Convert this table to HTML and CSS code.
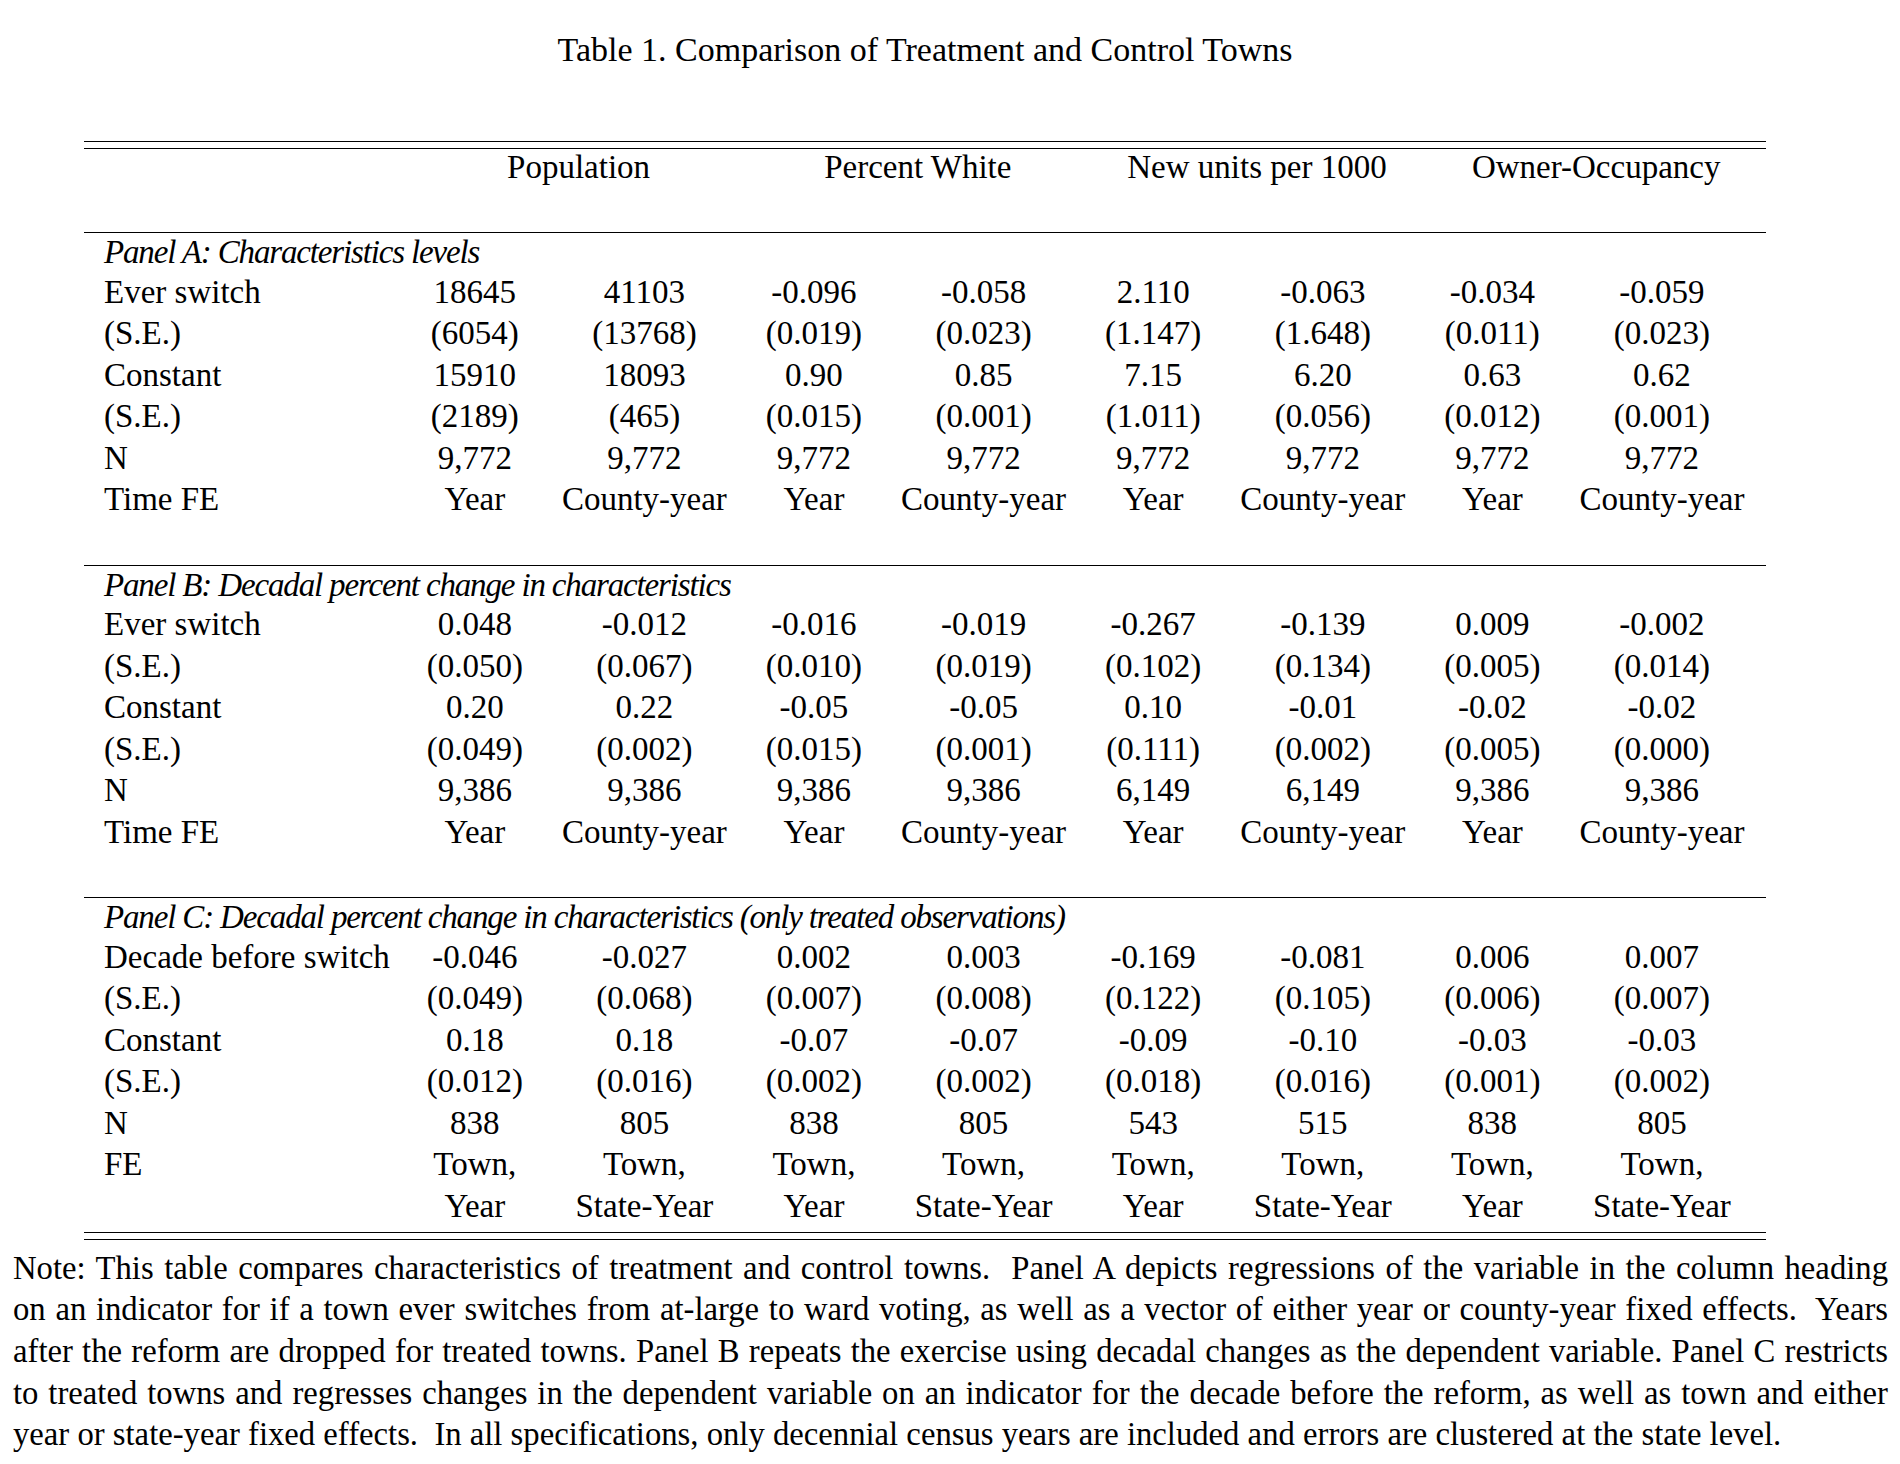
FILE: index.html
```html
<!DOCTYPE html>
<html lang="en">
<head>
<meta charset="utf-8">
<title>Table 1. Comparison of Treatment and Control Towns</title>
<link rel="stylesheet" href="styles.css">
</head>
<body>
<div class="page">
  <div class="wrap">
    <h1 class="title">Table 1. Comparison of Treatment and Control Towns</h1>
    <div class="tbl">
      <div class="rule-double"></div>
      <div class="head">
        <div class="row">
          <span class="lbl"></span>
          <span class="span2">Population</span>
          <span class="span2">Percent White</span>
          <span class="span2">New units per 1000</span>
          <span class="span2">Owner-Occupancy</span>
        </div>
        <div class="row blank"></div>
      </div>

      <section class="panel">
        <div class="row"><span class="ptitle">Panel A: Characteristics levels</span></div>
        <div class="row"><span class="lbl">Ever switch</span><span>18645</span><span>41103</span><span>-0.096</span><span>-0.058</span><span>2.110</span><span>-0.063</span><span>-0.034</span><span>-0.059</span></div>
        <div class="row"><span class="lbl">(S.E.)</span><span>(6054)</span><span>(13768)</span><span>(0.019)</span><span>(0.023)</span><span>(1.147)</span><span>(1.648)</span><span>(0.011)</span><span>(0.023)</span></div>
        <div class="row"><span class="lbl">Constant</span><span>15910</span><span>18093</span><span>0.90</span><span>0.85</span><span>7.15</span><span>6.20</span><span>0.63</span><span>0.62</span></div>
        <div class="row"><span class="lbl">(S.E.)</span><span>(2189)</span><span>(465)</span><span>(0.015)</span><span>(0.001)</span><span>(1.011)</span><span>(0.056)</span><span>(0.012)</span><span>(0.001)</span></div>
        <div class="row"><span class="lbl">N</span><span>9,772</span><span>9,772</span><span>9,772</span><span>9,772</span><span>9,772</span><span>9,772</span><span>9,772</span><span>9,772</span></div>
        <div class="row"><span class="lbl">Time FE</span><span>Year</span><span>County-year</span><span>Year</span><span>County-year</span><span>Year</span><span>County-year</span><span>Year</span><span>County-year</span></div>
        <div class="row blank"></div>
      </section>

      <section class="panel">
        <div class="row"><span class="ptitle">Panel B: Decadal percent change in characteristics</span></div>
        <div class="row"><span class="lbl">Ever switch</span><span>0.048</span><span>-0.012</span><span>-0.016</span><span>-0.019</span><span>-0.267</span><span>-0.139</span><span>0.009</span><span>-0.002</span></div>
        <div class="row"><span class="lbl">(S.E.)</span><span>(0.050)</span><span>(0.067)</span><span>(0.010)</span><span>(0.019)</span><span>(0.102)</span><span>(0.134)</span><span>(0.005)</span><span>(0.014)</span></div>
        <div class="row"><span class="lbl">Constant</span><span>0.20</span><span>0.22</span><span>-0.05</span><span>-0.05</span><span>0.10</span><span>-0.01</span><span>-0.02</span><span>-0.02</span></div>
        <div class="row"><span class="lbl">(S.E.)</span><span>(0.049)</span><span>(0.002)</span><span>(0.015)</span><span>(0.001)</span><span>(0.111)</span><span>(0.002)</span><span>(0.005)</span><span>(0.000)</span></div>
        <div class="row"><span class="lbl">N</span><span>9,386</span><span>9,386</span><span>9,386</span><span>9,386</span><span>6,149</span><span>6,149</span><span>9,386</span><span>9,386</span></div>
        <div class="row"><span class="lbl">Time FE</span><span>Year</span><span>County-year</span><span>Year</span><span>County-year</span><span>Year</span><span>County-year</span><span>Year</span><span>County-year</span></div>
        <div class="row blank"></div>
      </section>

      <section class="panel last">
        <div class="row"><span class="ptitle">Panel C: Decadal percent change in characteristics (only treated observations)</span></div>
        <div class="row"><span class="lbl">Decade before switch</span><span>-0.046</span><span>-0.027</span><span>0.002</span><span>0.003</span><span>-0.169</span><span>-0.081</span><span>0.006</span><span>0.007</span></div>
        <div class="row"><span class="lbl">(S.E.)</span><span>(0.049)</span><span>(0.068)</span><span>(0.007)</span><span>(0.008)</span><span>(0.122)</span><span>(0.105)</span><span>(0.006)</span><span>(0.007)</span></div>
        <div class="row"><span class="lbl">Constant</span><span>0.18</span><span>0.18</span><span>-0.07</span><span>-0.07</span><span>-0.09</span><span>-0.10</span><span>-0.03</span><span>-0.03</span></div>
        <div class="row"><span class="lbl">(S.E.)</span><span>(0.012)</span><span>(0.016)</span><span>(0.002)</span><span>(0.002)</span><span>(0.018)</span><span>(0.016)</span><span>(0.001)</span><span>(0.002)</span></div>
        <div class="row"><span class="lbl">N</span><span>838</span><span>805</span><span>838</span><span>805</span><span>543</span><span>515</span><span>838</span><span>805</span></div>
        <div class="row"><span class="lbl">FE</span><span>Town,<br>Year</span><span>Town,<br>State-Year</span><span>Town,<br>Year</span><span>Town,<br>State-Year</span><span>Town,<br>Year</span><span>Town,<br>State-Year</span><span>Town,<br>Year</span><span>Town,<br>State-Year</span></div>
      </section>
      <div class="rule-double bottom"></div>
    </div>
  </div>
  <p class="note">
    <span class="jl">Note: This table compares characteristics of treatment and control towns.&nbsp; Panel A depicts regressions of the variable in the column heading</span>
    <span class="jl">on an indicator for if a town ever switches from at-large to ward voting, as well as a vector of either year or county-year fixed effects.&nbsp; Years</span>
    <span class="jl">after the reform are dropped for treated towns. Panel B repeats the exercise using decadal changes as the dependent variable. Panel C restricts</span>
    <span class="jl">to treated towns and regresses changes in the dependent variable on an indicator for the decade before the reform, as well as town and either</span>
    <span class="ll">year or state-year fixed effects.&nbsp; In all specifications, only decennial census years are included and errors are clustered at the state level.</span>
  </p>
</div>
</body>
</html>
```

FILE: styles.css
```css
html, body {
  margin: 0;
  padding: 0;
  background: #ffffff;
}

body {
  font-family: "Liberation Serif", "Times New Roman", serif;
  color: #000000;
  font-size: 33px;
}

.page {
  padding: 29px 12px 0 13px;
}

.wrap {
  width: 1682px;
  margin-left: 71px;
}

.title {
  margin: 0;
  font-size: 34px;
  font-weight: normal;
  line-height: 41px;
  text-align: center;
}

.tbl {
  margin-top: 71px;
}

.rule-double {
  height: 6px;
  border-top: 1px solid #000;
  border-bottom: 1px solid #000;
}

.row {
  display: grid;
  grid-template-columns: 325px repeat(4, 131.6px 207.6px);
  line-height: 41.5px;
  height: 41.5px;
  white-space: nowrap;
}

.row > span {
  text-align: center;
}

.row > .lbl {
  text-align: left;
  padding-left: 20px;
}

.row > .span2 {
  grid-column: span 2;
}

.row > .ptitle {
  grid-column: 1 / -1;
  text-align: left;
  padding-left: 20px;
  padding-top: 2px;
  font-style: italic;
  letter-spacing: -1.15px;
}

.head {
  margin-top: -2px;
  padding-bottom: 2px;
}

.panel {
  border-top: 1px solid #000;
  padding-bottom: 2.5px;
}

.panel > .row:first-child {
  margin-top: -3px;
}

.panel.last .row:last-child {
  height: 85px;
}

.note {
  margin: 8px 0 0 0;
  line-height: 41.7px;
  font-size: 32.7px;
}

.note .jl {
  display: block;
  text-align: justify;
  text-align-last: justify;
}

.note .ll {
  display: block;
}
```
